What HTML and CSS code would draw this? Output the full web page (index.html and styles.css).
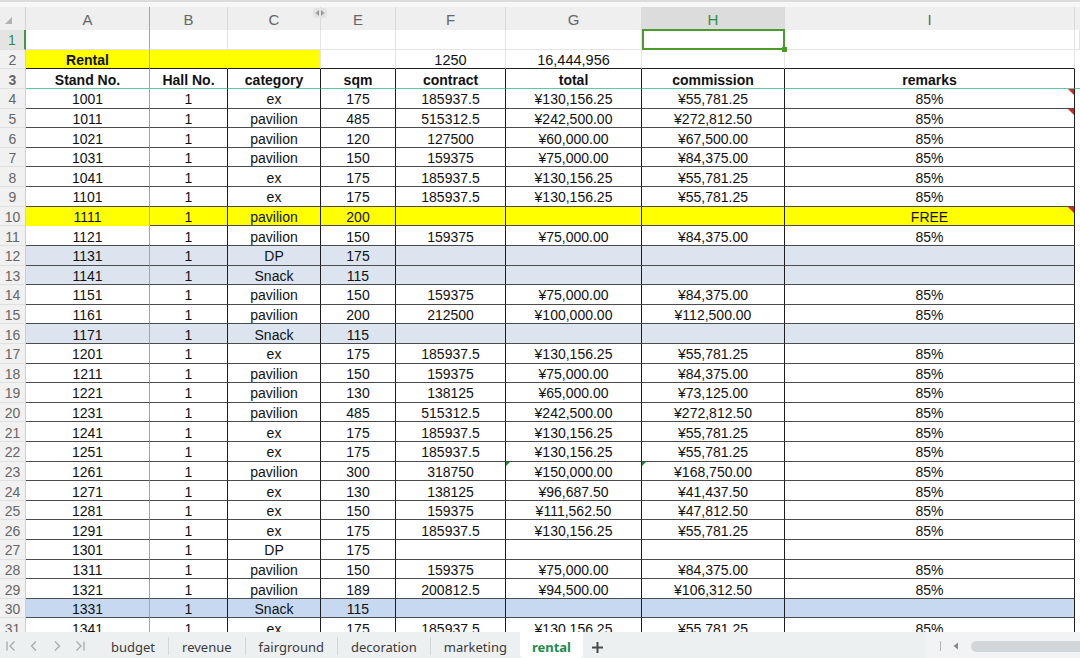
FILE: index.html
```html
<!DOCTYPE html>
<html lang="en">
<head>
    <meta charset="UTF-8">
    <title>rental</title>
    <link rel="stylesheet" href="styles.css">
</head>
<body>
    <div id="sheet">
        <div class="topstrip"></div>

        <!-- column letters -->
        <div class="row colhead">
            <div class="corner"><svg width="8" height="8" viewBox="0 0 8 8"><polygon points="7,0 7,7 0,7" fill="#b2b2b2"/></svg></div>
            <div>A</div><div>B</div>
            <div>C<span class="hidden-col"><svg width="12" height="8" viewBox="0 0 12 8"><polygon points="5,1 5,7 1.5,4" fill="#9a9a9a"/><polygon points="7,1 7,7 10.5,4" fill="#9a9a9a"/></svg></span></div>
            <div>E</div><div>F</div><div>G</div><div class="sel">H</div><div>I</div><div></div>
        </div>

        <div class="row top">
            <div class="rn sel">1</div><div></div><div></div><div></div><div></div><div></div><div></div>
            <div><span class="selbox"><i class="handle"></i></span></div><div></div><div></div>
        </div>
        <div class="row top r2">
            <div class="rn">2</div><div class="yel"><b>Rental</b></div><div class="yel"></div><div class="yel"></div><div></div><div class="big">1250</div><div class="big">16,444,956</div><div></div><div></div><div class="rest"></div>
        </div>
        <div class="row data hdr">
            <div class="rn">3</div><div>Stand No.</div><div>Hall No.</div><div>category</div><div>sqm</div><div>contract</div><div>total</div><div>commission</div><div>remarks</div><div class="rest"></div>
        </div>

        <div class="row data"><div class="rn">4</div><div>1001</div><div>1</div><div>ex</div><div>175</div><div>185937.5</div><div>¥130,156.25</div><div>¥55,781.25</div><div>85%<i class="note"></i></div><div class="rest"></div></div>
        <div class="row data"><div class="rn">5</div><div>1011</div><div>1</div><div>pavilion</div><div>485</div><div>515312.5</div><div>¥242,500.00</div><div>¥272,812.50</div><div>85%<i class="note"></i></div><div class="rest"></div></div>
        <div class="row data"><div class="rn">6</div><div>1021</div><div>1</div><div>pavilion</div><div>120</div><div>127500</div><div>¥60,000.00</div><div>¥67,500.00</div><div>85%</div><div class="rest"></div></div>
        <div class="row data"><div class="rn">7</div><div>1031</div><div>1</div><div>pavilion</div><div>150</div><div>159375</div><div>¥75,000.00</div><div>¥84,375.00</div><div>85%</div><div class="rest"></div></div>
        <div class="row data"><div class="rn">8</div><div>1041</div><div>1</div><div>ex</div><div>175</div><div>185937.5</div><div>¥130,156.25</div><div>¥55,781.25</div><div>85%</div><div class="rest"></div></div>
        <div class="row data"><div class="rn">9</div><div>1101</div><div>1</div><div>ex</div><div>175</div><div>185937.5</div><div>¥130,156.25</div><div>¥55,781.25</div><div>85%</div><div class="rest"></div></div>
        <div class="row data yellow"><div class="rn">10</div><div>1111</div><div>1</div><div>pavilion</div><div>200</div><div></div><div></div><div></div><div>FREE<i class="note"></i></div><div class="rest"></div></div>
        <div class="row data"><div class="rn">11</div><div>1121</div><div>1</div><div>pavilion</div><div>150</div><div>159375</div><div>¥75,000.00</div><div>¥84,375.00</div><div>85%</div><div class="rest"></div></div>
        <div class="row data blue"><div class="rn">12</div><div>1131</div><div>1</div><div>DP</div><div>175</div><div></div><div></div><div></div><div></div><div class="rest"></div></div>
        <div class="row data blue"><div class="rn">13</div><div>1141</div><div>1</div><div>Snack</div><div>115</div><div></div><div></div><div></div><div></div><div class="rest"></div></div>
        <div class="row data"><div class="rn">14</div><div>1151</div><div>1</div><div>pavilion</div><div>150</div><div>159375</div><div>¥75,000.00</div><div>¥84,375.00</div><div>85%</div><div class="rest"></div></div>
        <div class="row data"><div class="rn">15</div><div>1161</div><div>1</div><div>pavilion</div><div>200</div><div>212500</div><div>¥100,000.00</div><div>¥112,500.00</div><div>85%</div><div class="rest"></div></div>
        <div class="row data blue"><div class="rn">16</div><div>1171</div><div>1</div><div>Snack</div><div>115</div><div></div><div></div><div></div><div></div><div class="rest"></div></div>
        <div class="row data"><div class="rn">17</div><div>1201</div><div>1</div><div>ex</div><div>175</div><div>185937.5</div><div>¥130,156.25</div><div>¥55,781.25</div><div>85%</div><div class="rest"></div></div>
        <div class="row data"><div class="rn">18</div><div>1211</div><div>1</div><div>pavilion</div><div>150</div><div>159375</div><div>¥75,000.00</div><div>¥84,375.00</div><div>85%</div><div class="rest"></div></div>
        <div class="row data"><div class="rn">19</div><div>1221</div><div>1</div><div>pavilion</div><div>130</div><div>138125</div><div>¥65,000.00</div><div>¥73,125.00</div><div>85%</div><div class="rest"></div></div>
        <div class="row data"><div class="rn">20</div><div>1231</div><div>1</div><div>pavilion</div><div>485</div><div>515312.5</div><div>¥242,500.00</div><div>¥272,812.50</div><div>85%</div><div class="rest"></div></div>
        <div class="row data"><div class="rn">21</div><div>1241</div><div>1</div><div>ex</div><div>175</div><div>185937.5</div><div>¥130,156.25</div><div>¥55,781.25</div><div>85%</div><div class="rest"></div></div>
        <div class="row data"><div class="rn">22</div><div>1251</div><div>1</div><div>ex</div><div>175</div><div>185937.5</div><div>¥130,156.25</div><div>¥55,781.25</div><div>85%</div><div class="rest"></div></div>
        <div class="row data"><div class="rn">23</div><div>1261</div><div>1</div><div>pavilion</div><div>300</div><div>318750</div><div>¥150,000.00<i class="warn"></i></div><div>¥168,750.00<i class="warn"></i></div><div>85%</div><div class="rest"></div></div>
        <div class="row data"><div class="rn">24</div><div>1271</div><div>1</div><div>ex</div><div>130</div><div>138125</div><div>¥96,687.50</div><div>¥41,437.50</div><div>85%</div><div class="rest"></div></div>
        <div class="row data"><div class="rn">25</div><div>1281</div><div>1</div><div>ex</div><div>150</div><div>159375</div><div>¥111,562.50</div><div>¥47,812.50</div><div>85%</div><div class="rest"></div></div>
        <div class="row data"><div class="rn">26</div><div>1291</div><div>1</div><div>ex</div><div>175</div><div>185937.5</div><div>¥130,156.25</div><div>¥55,781.25</div><div>85%</div><div class="rest"></div></div>
        <div class="row data"><div class="rn">27</div><div>1301</div><div>1</div><div>DP</div><div>175</div><div></div><div></div><div></div><div></div><div class="rest"></div></div>
        <div class="row data"><div class="rn">28</div><div>1311</div><div>1</div><div>pavilion</div><div>150</div><div>159375</div><div>¥75,000.00</div><div>¥84,375.00</div><div>85%</div><div class="rest"></div></div>
        <div class="row data"><div class="rn">29</div><div>1321</div><div>1</div><div>pavilion</div><div>189</div><div>200812.5</div><div>¥94,500.00</div><div>¥106,312.50</div><div>85%</div><div class="rest"></div></div>
        <div class="row data blue2"><div class="rn">30</div><div>1331</div><div>1</div><div>Snack</div><div>115</div><div></div><div></div><div></div><div></div><div class="rest"></div></div>
        <div class="row data"><div class="rn">31</div><div>1341</div><div>1</div><div>ex</div><div>175</div><div>185937.5</div><div>¥130,156.25</div><div>¥55,781.25</div><div>85%</div><div class="rest"></div></div>
    </div>

    <div id="tabbar">
        <div class="nav">
            <svg width="12" height="12" viewBox="0 0 12 12"><path d="M2 1.5v9M9.5 1.5L5 6l4.5 4.5" /></svg>
            <svg width="12" height="12" viewBox="0 0 12 12"><path d="M8 1.5L3.5 6 8 10.5" /></svg>
            <svg width="12" height="12" viewBox="0 0 12 12"><path d="M4 1.5L8.5 6 4 10.5" /></svg>
            <svg width="12" height="12" viewBox="0 0 12 12"><path d="M2.5 1.5L7 6l-4.5 4.5M10 1.5v9" /></svg>
        </div>
        <div class="tabs">
            <div class="tab">budget</div><i class="sep"></i>
            <div class="tab">revenue</div><i class="sep"></i>
            <div class="tab">fairground</div><i class="sep"></i>
            <div class="tab">decoration</div><i class="sep"></i>
            <div class="tab">marketing</div>
            <div class="tab active">rental</div>
            <div class="add"><svg width="11" height="11" viewBox="0 0 11 11"><path d="M5.5 0v11M0 5.5h11" stroke="#4a4a4a" stroke-width="2"/></svg></div>
        </div>
        <div class="hscroll">
            <i class="bar"></i>
            <svg width="6" height="8" viewBox="0 0 6 8"><polygon points="5,0.5 5,7.5 0.5,4" fill="#8a8a8a"/></svg>
            <div class="thumb"></div>
        </div>
    </div>
</body>
</html>
```

FILE: styles.css
```css
html, body {
    margin: 0;
    height: 100%;
}

body {
    height: 658px;
    display: flex;
    flex-direction: column;
    overflow: hidden;
    background: #fff;
    font-family: "Liberation Sans", Arial, sans-serif;
}

#sheet {
    flex: 1;
    overflow: hidden;
}

.topstrip {
    height: 7px;
    box-sizing: border-box;
    border-top: 2px solid #dcdcdc;
    background: #f7f7f7;
}

/* every row shares the same columns: row no., A B C E F G H I, rest */
.row {
    display: grid;
    grid-template-columns: 26px 124px 78px 93px 75px 110px 136px 143px 290px 1fr;
    height: 19.62px;
}

.row > div {
    box-sizing: border-box;
    position: relative;
    display: flex;
    align-items: center;
    justify-content: center;
    padding-top: 2px;
    white-space: nowrap;
    font-size: 14px;
    color: #111;
}

/* column header strip */
.colhead {
    height: 23.2px;
    background: #efefef;
}
.colhead > div {
    font-size: 15px;
    color: #666;
    border-right: 1px solid #dadada;
}
.colhead > div:last-child {
    border-right: none;
}
.colhead .corner {
    justify-content: flex-start;
    padding: 4px 0 0 5px;
    border-right: 1px solid #cfcfcf;
}
.colhead .sel {
    background: #dcdcdc;
    color: #2f8f3e;
}
.hidden-col {
    position: absolute;
    right: -7px;
    top: 1px;
    display: flex;
    background: #e3e3e3;
    border-radius: 2px;
    padding: 1px 1px;
}

/* row numbers */
.row > .rn {
    background: #f1f1f1;
    color: #666;
    font-size: 14px;
    border-right: 1px solid #cfcfcf;
    border-bottom: 1px solid #e0e0e0;
}
.row > .rn.sel {
    background: #e4e4e4;
    color: #2f8f3e;
    border-right: 2px solid #3e9a48;
}

/* rows 1-2: plain grid lines */
.top > div {
    border-right: 1px solid #e4e4e4;
    border-bottom: 1px solid #e4e4e4;
}
.r2 > div:not(.rn):not(.rest) {
    border-bottom: 1px solid #1e1e1e;
}
.r2 .yel {
    background: #ffff00;
}
.r2 .big {
    font-size: 14.5px;
}
.r2 b {
    font-size: 14px;
}

/* bordered table */
.data > div {
    border-right: 1px solid #1e1e1e;
    border-bottom: 1px solid #4c4c4c;
}
.data > .rest,
.top > .rest {
    border-right: none;
    border-bottom: none;
    background: #fff;
}
.hdr > div {
    font-weight: bold;
    border-bottom: 1px solid #5ccaa4;
}
.hdr > .rest {
    border-bottom: 1px solid #5ccaa4;
}

/* frozen column line after A */
.row > div:nth-child(2) {
    border-right: 1px solid #5ccaa4;
}

.yellow > div:not(.rn):not(.rest) {
    background: #ffff00;
}
.yellow > div:nth-child(2) {
    border-bottom-color: transparent;
}
.blue > div:not(.rn):not(.rest) {
    background: #dbe4ef;
}
.blue2 > div:not(.rn):not(.rest) {
    background: #c6d9f0;
}

/* comment / error markers */
.note {
    position: absolute;
    top: 0;
    right: 0;
    border-top: 6px solid #e0201c;
    border-left: 6px solid transparent;
}
.warn {
    position: absolute;
    top: 0;
    left: 0;
    border-top: 4px solid #1f8a2c;
    border-right: 4px solid transparent;
}

/* active cell H1 */
.selbox {
    position: absolute;
    left: 0;
    top: -1px;
    right: -1px;
    bottom: -1px;
    border: 2px solid #4a9a2c;
    z-index: 2;
}
.handle {
    position: absolute;
    right: -4px;
    bottom: -4px;
    width: 5px;
    height: 5px;
    background: #4a9a2c;
}

/* sheet tabs */
#tabbar {
    height: 26px;
    flex-shrink: 0;
    display: flex;
    align-items: stretch;
    background: #ecf0f1;
    font-family: "Noto Sans", "Liberation Sans", sans-serif;
}
.nav {
    display: flex;
    align-items: center;
    gap: 11px;
    padding: 2px 0 0 5px;
    width: 93px;
}
.nav svg path {
    fill: none;
    stroke: #a9a9a9;
    stroke-width: 1.3;
}
.tabs {
    display: flex;
    align-items: center;
}
.tab {
    height: 26px;
    box-sizing: border-box;
    display: flex;
    align-items: center;
    padding: 3px 13px 0;
    font-size: 13px;
    color: #3a3a3a;
}
.tab.active {
    background: #fff;
    color: #1d8b4c;
    font-weight: bold;
    padding: 3px 12px 0;
    border-radius: 0 0 4px 4px;
}
.sep {
    width: 1px;
    height: 18px;
    margin-top: 2px;
    background: #d3d7d9;
}
.add {
    display: flex;
    align-items: center;
    padding-left: 9px;
    padding-top: 4px;
}
.hscroll {
    margin-left: auto;
    width: 140px;
    display: flex;
    align-items: center;
    gap: 12px;
    padding: 2px 0 0 15px;
    background: #f1f3f4;
}
.hscroll .bar {
    width: 1px;
    height: 10px;
    background: #b5b5b5;
}
.thumb {
    flex: 1;
    height: 11px;
    margin-right: -6px;
    border-radius: 6px;
    background: #d3d6d8;
}
```
